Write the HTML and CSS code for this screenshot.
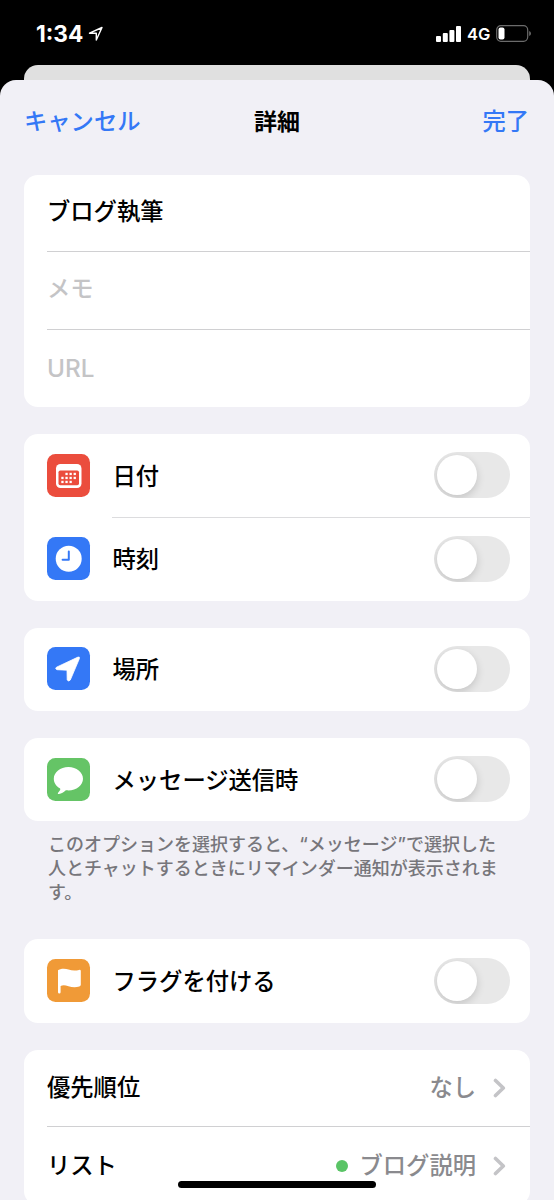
FILE: index.html
```html
<!DOCTYPE html>
<html lang="ja">
<head>
    <meta charset="UTF-8">
    <title>詳細</title>
    <link rel="stylesheet" href="styles.css">
</head>
<body>
<div class="status">
    <div class="time">
        <span>1:34</span>
        <svg class="location" width="16" height="16" viewBox="0 0 16 16">
            <path d="M1.5 7.2 14 1.5 8.3 14V7.3Z" fill="none" stroke="#fff" stroke-width="1.4" stroke-linejoin="round"/>
        </svg>
    </div>
    <div class="signal">
        <svg width="26" height="16" viewBox="0 0 26 16" fill="#fff">
            <rect x="0" y="10" width="5" height="6" rx="1"/>
            <rect x="6.8" y="7" width="5" height="9" rx="1"/>
            <rect x="13.4" y="4" width="5" height="12" rx="1"/>
            <rect x="20" y="0" width="5" height="16" rx="1"/>
        </svg>
        <span class="network">4G</span>
        <svg width="36" height="17" viewBox="0 0 36 17">
            <rect x=".7" y=".7" width="31" height="15.6" rx="4.2" fill="none" stroke="#6b6b6b" stroke-width="1.2"/>
            <rect x="2.5" y="2.5" width="6" height="12" rx="2" fill="#fff"/>
            <path d="M33.2 6v5q1.8-.8 1.8-2.5T33.2 6Z" fill="#6b6b6b"/>
        </svg>
    </div>
</div>

<div class="behind"></div>

<main class="sheet">
    <header>
        <a class="cancel">キャンセル</a>
        <h1>詳細</h1>
        <a class="done">完了</a>
    </header>

    <section class="card fields">
        <div class="field">ブログ執筆</div>
        <div class="field placeholder">メモ</div>
        <div class="field placeholder url">URL</div>
    </section>

    <section class="card">
        <div class="row">
            <span class="icon red">
                <svg width="43" height="43" viewBox="0 0 43 43">
                    <rect x="9" y="10" width="25.5" height="24" rx="4.5" fill="#fff"/>
                    <rect x="11.5" y="16.5" width="20.5" height="14.8" rx="1.8" fill="#eb4d3d"/>
                    <g fill="#fff">
                        <rect x="18.4" y="18.8" width="2.3" height="2.3"/>
                        <rect x="22.5" y="18.8" width="2.3" height="2.3"/>
                        <rect x="26.6" y="18.8" width="2.3" height="2.3"/>
                        <rect x="14.3" y="22.8" width="2.3" height="2.3"/>
                        <rect x="18.4" y="22.8" width="2.3" height="2.3"/>
                        <rect x="22.5" y="22.8" width="2.3" height="2.3"/>
                        <rect x="26.6" y="22.8" width="2.3" height="2.3"/>
                        <rect x="14.3" y="26.8" width="2.3" height="2.3"/>
                        <rect x="18.4" y="26.8" width="2.3" height="2.3"/>
                        <rect x="22.5" y="26.8" width="2.3" height="2.3"/>
                    </g>
                </svg>
            </span>
            <span class="label">日付</span>
            <span class="toggle"></span>
        </div>
        <div class="row">
            <span class="icon blue">
                <svg width="43" height="43" viewBox="0 0 43 43">
                    <circle cx="21.7" cy="21.8" r="13" fill="#fff"/>
                    <path d="M21.8 14.6v8.1H15.6" fill="none" stroke="#3478f6" stroke-width="2" stroke-linecap="round" stroke-linejoin="round"/>
                </svg>
            </span>
            <span class="label">時刻</span>
            <span class="toggle"></span>
        </div>
    </section>

    <section class="card">
        <div class="row">
            <span class="icon blue">
                <svg width="43" height="43" viewBox="0 0 43 43">
                    <path d="M9.5 20.2 31 10.1Q33 9.5 32.4 11.6L23.3 33Q21.8 35 20.2 33L20 23.2 10 22.7Q7.6 21.6 9.5 20.2Z" fill="#fff" stroke="#fff" stroke-width=".8" stroke-linejoin="round"/>
                </svg>
            </span>
            <span class="label">場所</span>
            <span class="toggle"></span>
        </div>
    </section>

    <section class="card">
        <div class="row">
            <span class="icon green">
                <svg width="43" height="43" viewBox="0 0 43 43">
                    <path d="M21.4 9C13.3 9 6.8 14.2 6.8 20.7c0 4 2.4 7.4 6 9.5.8.6.5 1.4 0 2.4l-1.7 2.1c-.6.9-.1 1.4.9 1.2 2.6-.4 4.7-1.7 6.5-3.4 1-.3 1.7-.1 2.9-.1C29.5 32.4 36 27.2 36 20.7S29.5 9 21.4 9Z" fill="#fff"/>
                </svg>
            </span>
            <span class="label">メッセージ送信時</span>
            <span class="toggle"></span>
        </div>
    </section>
    <p class="note">このオプションを選択すると、“メッセージ”で選択した<br>人とチャットするときにリマインダー通知が表示されま<br>す。</p>

    <section class="card">
        <div class="row">
            <span class="icon orange">
                <svg width="43" height="43" viewBox="0 0 43 43">
                    <path d="M11 11.3C12.5 9.7 18 9.2 21.5 10.5S29 11.7 32 10.9Q33.8 10.5 33.8 12V25.8Q33.8 27 32.3 27.5C28.5 28.8 25 28.4 21.5 27.2S15.5 26 13.6 27V33.2Q13.5 34.4 12.3 34.4T11 33.2Z" fill="#fff"/>
                </svg>
            </span>
            <span class="label">フラグを付ける</span>
            <span class="toggle"></span>
        </div>
    </section>

    <section class="card links">
        <div class="link">
            <span>優先順位</span>
            <span class="value">なし</span>
            <svg class="chevron" width="13" height="20" viewBox="0 0 13 20">
                <path d="M2.5 2.5 10.3 10 2.5 17.5" fill="none" stroke="#c4c4c7" stroke-width="3.6" stroke-linecap="round" stroke-linejoin="round"/>
            </svg>
        </div>
        <div class="link">
            <span>リスト</span>
            <span class="value"><i class="dot"></i>ブログ説明</span>
            <svg class="chevron" width="13" height="20" viewBox="0 0 13 20">
                <path d="M2.5 2.5 10.3 10 2.5 17.5" fill="none" stroke="#c4c4c7" stroke-width="3.6" stroke-linecap="round" stroke-linejoin="round"/>
            </svg>
        </div>
    </section>
</main>

<div class="home"></div>
</body>
</html>
```
FILE: styles.css
```css
* {
    box-sizing: border-box;
}

body {
    margin: 0;
    height: 1200px;
    overflow: hidden;
    background: black;
    font-family: Inter, "Noto Sans CJK JP", sans-serif;
    font-size: 23.3px;
    font-weight: 500;
    line-height: 34px;
    color: black;
}

svg {
    display: block;
}

.status {
    height: 65px;
    padding: 17px 23px 0 36px;
    display: flex;
    justify-content: space-between;
    color: white;
}

.time {
    height: 34px;
    display: flex;
    align-items: center;
    gap: 5px;
    font-size: 22.7px;
    font-weight: 700;
}

.location {
    margin-bottom: 1px;
}

.signal {
    height: 33px;
    display: flex;
    align-items: center;
    gap: 5px;
    margin-right: -1px;
}

.network {
    width: 24px;
    font-size: 16.5px;
    font-weight: 600;
}

.behind {
    height: 30px;
    margin: 0 24px -15px;
    background: #e0e0e0;
    border-radius: 14px 14px 0 0;
}

.sheet {
    position: relative;
    height: 1140px;
    padding: 0 24px;
    background: #f1f0f6;
    border-radius: 16px 16px 0 0;
}

header {
    height: 95px;
    padding-top: 25px;
    display: grid;
    grid-template-columns: 1fr auto 1fr;
}

h1 {
    margin: 0;
    font-size: 23px;
    font-weight: 700;
}

.cancel, .done {
    color: #3478f6;
}

.done {
    text-align: right;
    margin-right: 1px;
}

.card {
    margin-bottom: 26.8px;
    background: white;
    border-radius: 14px;
    overflow: hidden;
}

.field {
    height: 77px;
    margin-left: 23px;
    padding-top: 20px;
    border-bottom: 1px solid #d0d0d2;
}

.field:nth-child(2) {
    height: 78px;
}

.field:last-child {
    border-bottom: none;
}

.placeholder {
    color: #c4c4c6;
}

.url {
    padding-top: 21px;
    font-size: 24.3px;
}

.fields {
    height: 232px;
}

.row {
    height: 83.5px;
    padding: 0 20.5px 1px 23px;
    display: flex;
    align-items: center;
}

.row + .row {
    background: linear-gradient(#dcdcde, #dcdcde) 88px 0 / 100% 1px no-repeat;
}

.icon {
    width: 43px;
    height: 43px;
    margin-right: 22.5px;
    border-radius: 8.5px;
}

.red {
    background: #eb4d3d;
}

.blue {
    background: #3478f6;
}

.green {
    background: #65c466;
}

.orange {
    background: #f09a37;
}

.label {
    flex: 1;
    padding-top: 3px;
}

.toggle {
    width: 76px;
    height: 46px;
    padding: 3px;
    border-radius: 23px;
    background: #e8e8e8;
    overflow: hidden;
}

.toggle::before {
    content: "";
    display: block;
    width: 40px;
    height: 40px;
    border-radius: 50%;
    background: white;
    box-shadow: 0 3px 9px rgba(0, 0, 0, 0.16);
}

.note {
    margin: -15px 0 35px 24px;
    font-size: 18px;
    line-height: 23.7px;
    color: #77767b;
    white-space: nowrap;
}

.links {
    height: 155px;
}

.link {
    height: 77.5px;
    margin-left: 23px;
    padding: 1px 24px 0 0;
    display: flex;
    align-items: center;
    border-bottom: 1px solid #d0d0d2;
}

.link:last-child {
    border-bottom: none;
}

.value {
    margin-left: auto;
    margin-right: 17px;
    display: flex;
    align-items: center;
    color: #8a8a8e;
}

.dot {
    width: 12px;
    height: 12px;
    margin-right: 12px;
    border-radius: 50%;
    background: #5ac466;
}

/* home indicator lies over the list */
.home {
    position: fixed;
    left: 178px;
    bottom: 12px;
    width: 198px;
    height: 7px;
    border-radius: 4px;
    background: black;
}
```
